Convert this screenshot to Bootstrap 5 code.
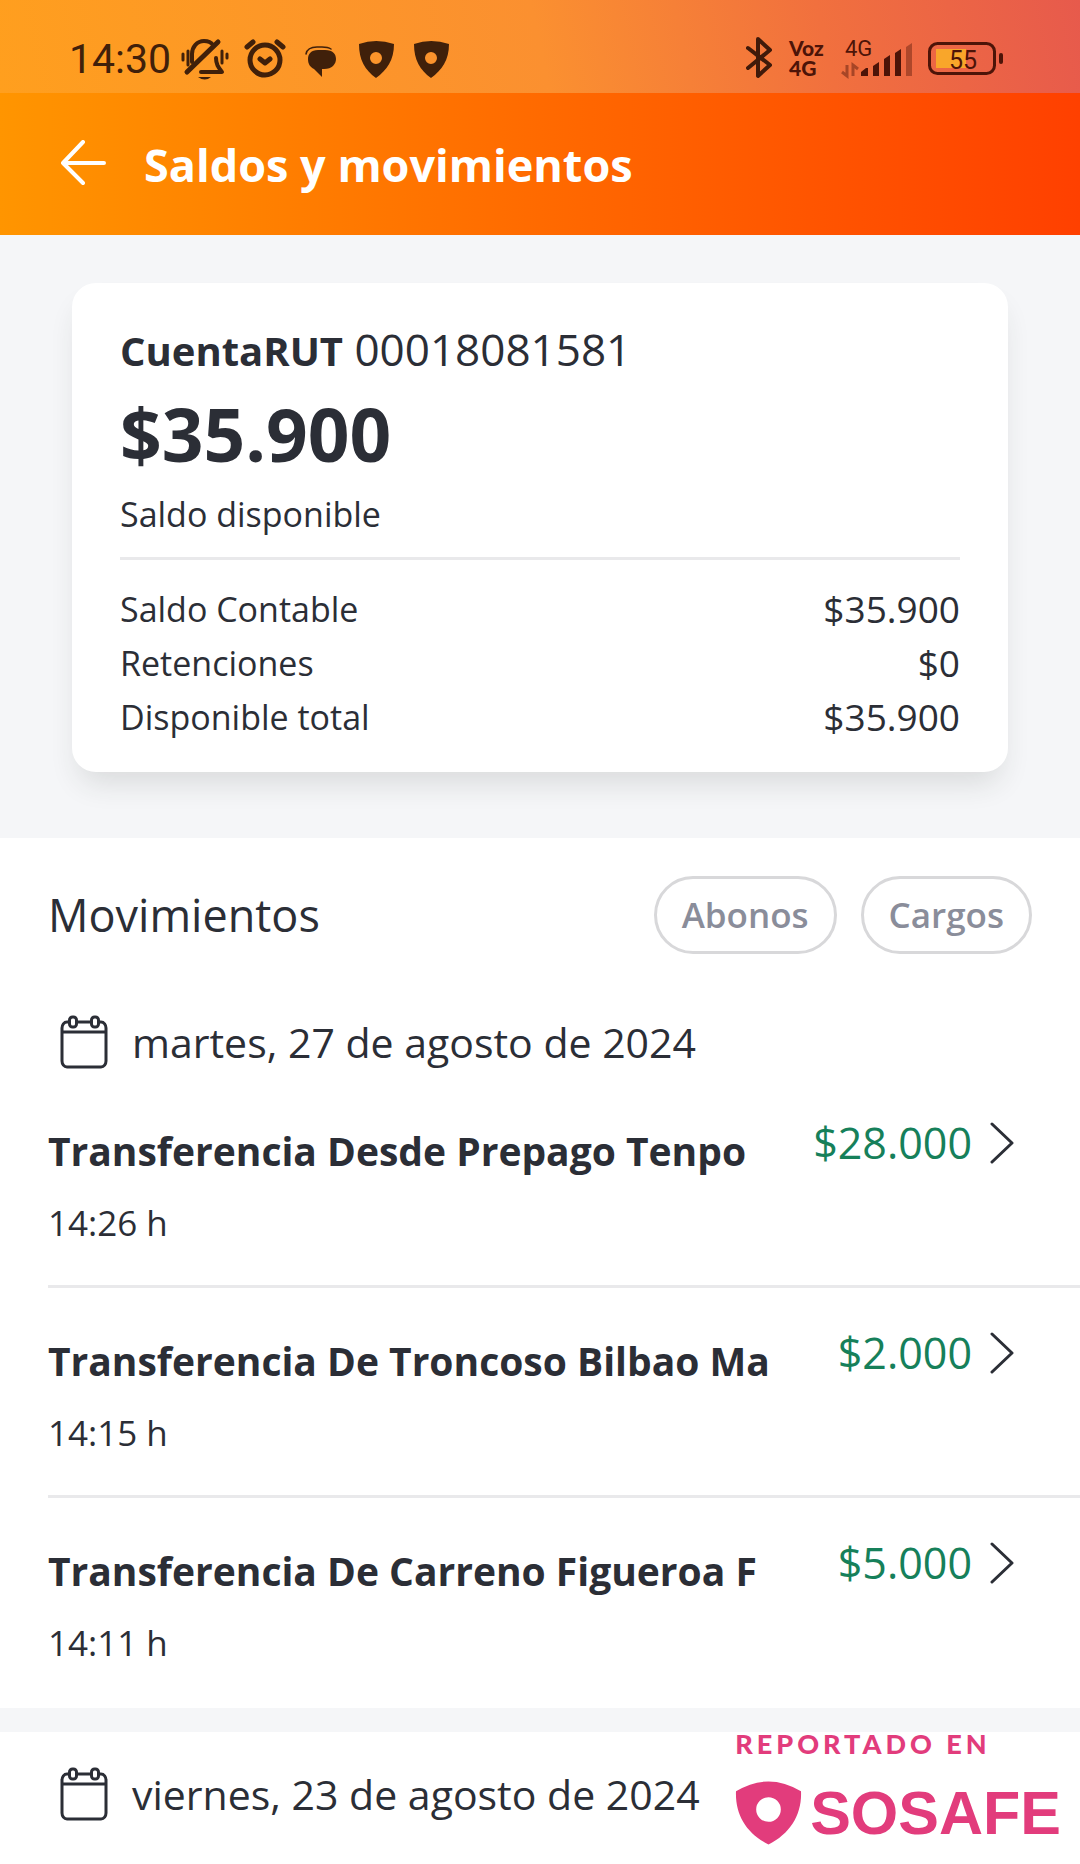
<!DOCTYPE html>
<html lang="es">
<head>
<meta charset="utf-8">
<meta name="viewport" content="width=device-width, initial-scale=1">
<title>Saldos y movimientos</title>
<link href="https://cdn.jsdelivr.net/npm/bootstrap@5.3.0/dist/css/bootstrap.min.css" rel="stylesheet">
<style>
  :root { --ink: #2b2e36; --line: #e9e9eb; --soft: #f5f6f8; --brand: #e23c7c; }
  body { font-family: "Open Sans", "Noto Sans", sans-serif; color: var(--ink); background: #fff; position: relative; overflow-x: hidden; }
  svg { display: block; flex: none; }
  .status-bar { height: 93px; padding: 26px 76px 0 69px; color: #40200a; font-family: Roboto, sans-serif;
    background: linear-gradient(78deg, #ff9f1e 0%, #fb9030 50%, #f1703e 76%, #e75a4c 100%); }
  .status-row { height: 66px; }
  .clock { font-size: 41px; line-height: 70px; }
  .title-bar { height: 142px; padding: 0 60px; color: #fff; background: linear-gradient(90deg, #ff9500, #ff6a00 50%, #ff4000); }
  .title-bar h1 { font-size: 45px; line-height: 64px; font-weight: 700; margin: 2px 0 0 36px; }
  .balance-area { background: var(--soft); padding: 48px 72px 66px; }
  .balance-card { border: 0; border-radius: 24px; padding: 36px 48px 28px; box-shadow: 0 18px 30px -8px rgba(40,50,45,.14); }
  .account-name { font-size: 44px; line-height: 60px; }
  .account-name strong { font-size: 40px; font-weight: 700; }
  .balance-total { font-size: 73px; line-height: 90px; font-weight: 700; }
  .detail-text { font-size: 34px; line-height: 54px; }
  .detail-amount { font-size: 37px; }
  .rule-line { height: 3px; margin: 16px 0 22px; background: var(--line); }
  .section-head { padding: 38px 48px 0; }
  .section-head h2 { font-size: 45px; line-height: 78px; font-weight: 400; }
  .filter-btn { height: 78px; border: 3px solid #d8d8da; border-radius: 39px; color: #8a8d9a; font-size: 35px; line-height: 48px; font-weight: 600; padding: 0 25px; }
  .day-head { padding: 0 60px; margin-top: 58px; font-size: 41px; line-height: 60px; }
  .movement-list { padding-top: 6px; }
  .movement { color: inherit; margin-left: 48px; padding: 35px 66px 38px 0; border-bottom: 3px solid var(--line); }
  .movement:last-child { border-bottom-color: transparent; }
  .movement-name { font-size: 39px; line-height: 60px; font-weight: 700; margin: 8px 0 18px; }
  .movement-time { font-size: 35px; line-height: 48px; }
  .movement-amount { font-size: 43px; line-height: 60px; color: #16805a; }
  .day-gap { height: 24px; background: var(--soft); }
  .day-head-next { margin-top: 32px; padding-bottom: 41px; }
  .reported { position: absolute; right: 19px; bottom: 19px; color: var(--brand); font-family: Lato, sans-serif; }
  .reported-label { font-size: 27px; line-height: 32px; font-weight: 900; letter-spacing: 4px; }
  .reported-name { font-size: 61px; line-height: 64px; font-weight: 700; font-family: "Liberation Sans", sans-serif; }
</style>
<script src="https://cdn.jsdelivr.net/npm/bootstrap@5.3.0/dist/js/bootstrap.bundle.min.js"></script>
</head>
<body>
<div class="status-bar">
  <div class="status-row d-flex align-items-center justify-content-between">
    <div class="d-flex align-items-center">
      <span class="clock">14:30</span>
      <svg class="ms-2" width="288" height="48" viewBox="-2 1 288 48" fill="none" stroke="#40200a" stroke-linecap="round" stroke-linejoin="round" aria-hidden="true">
        <g stroke-width="4"><path d="M11 28V20c0-7 5-13 12-13 4 0 7 1 9 4M35 24c0 6 2 9 6 14H20"/><path d="M6 38 37 8" stroke-width="5"/><path d="M2 20v6M7 17v14M41 17v12M46 20v4" stroke-width="3"/></g>
        <path d="M17 43h13q-6 5-13 0z" fill="#40200a" stroke="none"/>
        <g stroke-width="5"><circle cx="84" cy="26" r="15"/><path d="m79 25 5 4 5-4M66 13l6-5M96 8l6 5"/></g>
        <path d="M125 20c1-5 5-7 11-7h5c4 0 6 0 9 2" stroke-width="1.500"/>
        <path d="M137 16h7c8 0 11 4 11 9s-4 10-12 10h-2v8l-8-8c-4-2-6-5-6-10 0-5 3-9 10-9z" fill="#40200a" stroke="none"/>
        <g fill="#40200a" stroke="none" fill-rule="evenodd"><path id="mini" d="M178 10q17-6 35 0c0 16-7 26-18 34-11-8-17-18-17-34zm17 8a6 6 0 1 0 0 12 6 6 0 0 0 0-12z"/><use href="#mini" x="55"/></g>
      </svg>
    </div>
    <svg width="258" height="48" viewBox="0 1 258 48" aria-hidden="true" font-family="Roboto, sans-serif" fill="#4d1408">
      <path d="m2 14 22 17-12 11V5l12 11L2 34" fill="none" stroke="#401a0a" stroke-width="4" stroke-linecap="round" stroke-linejoin="round"/>
      <g font-family="Lato, sans-serif" font-weight="900" font-size="21"><text x="43" y="22">Voz</text><text x="43" y="42">4G</text></g>
      <text x="99" y="22" font-size="22">4G</text>
      <g fill="none" stroke="#4d1408" stroke-width="3" opacity=".45"><path d="M101 31v11l-5-4M107 42V31l5 4"/></g>
      <path d="M115 42v-4l5-4h2v8zM127 42V32l6-4v14zM138 42V25l6-4v21zM149 42V19l6-4v27z"/>
      <path d="M160 42V13l6-4v33z" opacity=".4"/>
      <rect x="190" y="15" width="30" height="19" fill="#f9a62a"/>
      <rect x="183.500" y="9.500" width="65" height="30" rx="8" fill="none" stroke="#4d1408" stroke-width="3"/>
      <rect x="253" y="19" width="4" height="11" rx="2"/>
      <text x="203" y="35" font-size="25">55</text>
    </svg>
  </div>
</div>
<header class="title-bar d-flex align-items-center">
  <a href="#" aria-label="Volver"><svg width="48" height="48" viewBox="0 0 48 48" fill="none" stroke="#fff" stroke-width="4" stroke-linecap="round" stroke-linejoin="round"><path d="M23 2 3 23l20 20M3 23h41"/></svg></a>
  <h1>Saldos y movimientos</h1>
</header>

<section class="balance-area">
  <div class="card balance-card">
    <div class="account-name"><strong>CuentaRUT</strong> 00018081581</div>
    <div class="balance-total mt-2">$35.900</div>
    <div class="detail-text mt-2">Saldo disponible</div>
    <div class="rule-line"></div>
    <div class="detail-text d-flex justify-content-between"><span>Saldo Contable</span><span class="detail-amount">$35.900</span></div>
    <div class="detail-text d-flex justify-content-between"><span>Retenciones</span><span class="detail-amount">$0</span></div>
    <div class="detail-text d-flex justify-content-between"><span>Disponible total</span><span class="detail-amount">$35.900</span></div>
  </div>
</section>

<main>
  <div class="section-head d-flex justify-content-between">
    <h2 class="mb-0">Movimientos</h2>
    <div class="d-flex gap-4">
      <button type="button" class="btn filter-btn">Abonos</button>
      <button type="button" class="btn filter-btn">Cargos</button>
    </div>
  </div>

  <div class="day-head d-flex align-items-center gap-4">
    <svg width="48" height="54" viewBox="0 0 48 54" fill="none" stroke="#2b2e36" stroke-width="3"><path d="M9 7H7c-3 0-5 3-5 6v33c0 3 2 6 5 6h34c3 0 5-3 5-6V13c0-3-2-6-5-6h-2M17 7h14M2 17h44"/><rect x="9.500" y="2" width="7" height="10" rx="3"/><rect x="31.500" y="2" width="7" height="10" rx="3"/></svg>
    <span>martes, 27 de agosto de 2024</span>
  </div>
  <div class="movement-list">
    <a href="#" class="movement d-flex justify-content-between text-decoration-none">
      <div><div class="movement-name">Transferencia Desde Prepago Tenpo</div><div class="movement-time">14:26 h</div></div>
      <div class="movement-amount d-flex align-self-start align-items-center gap-3"><span>$28.000</span><svg width="26" height="44" viewBox="0 0 26 44" fill="none" stroke="#2b2e36" stroke-width="3" stroke-linecap="round" stroke-linejoin="round"><path d="m4 3 20 19L4 41"/></svg></div>
    </a>
    <a href="#" class="movement d-flex justify-content-between text-decoration-none">
      <div><div class="movement-name">Transferencia De Troncoso Bilbao Ma</div><div class="movement-time">14:15 h</div></div>
      <div class="movement-amount d-flex align-self-start align-items-center gap-3"><span>$2.000</span><svg width="26" height="44" viewBox="0 0 26 44" fill="none" stroke="#2b2e36" stroke-width="3" stroke-linecap="round" stroke-linejoin="round"><path d="m4 3 20 19L4 41"/></svg></div>
    </a>
    <a href="#" class="movement d-flex justify-content-between text-decoration-none">
      <div><div class="movement-name">Transferencia De Carreno Figueroa F</div><div class="movement-time">14:11 h</div></div>
      <div class="movement-amount d-flex align-self-start align-items-center gap-3"><span>$5.000</span><svg width="26" height="44" viewBox="0 0 26 44" fill="none" stroke="#2b2e36" stroke-width="3" stroke-linecap="round" stroke-linejoin="round"><path d="m4 3 20 19L4 41"/></svg></div>
    </a>
  </div>
  <div class="day-gap"></div>
  <div class="day-head day-head-next d-flex align-items-center gap-4">
    <svg width="48" height="54" viewBox="0 0 48 54" fill="none" stroke="#2b2e36" stroke-width="3"><path d="M9 7H7c-3 0-5 3-5 6v33c0 3 2 6 5 6h34c3 0 5-3 5-6V13c0-3-2-6-5-6h-2M17 7h14M2 17h44"/><rect x="9.500" y="2" width="7" height="10" rx="3"/><rect x="31.500" y="2" width="7" height="10" rx="3"/></svg>
    <span>viernes, 23 de agosto de 2024</span>
  </div>
</main>

<div class="reported">
  <div class="reported-label">REPORTADO EN</div>
  <div class="d-flex align-items-center gap-2 mt-3 pt-1">
    <svg width="67" height="66" viewBox="0 0 68 66" fill="#e23c7c" fill-rule="evenodd" aria-hidden="true"><path d="M1 11Q34-9 67 11c1 24-11 43-33 54C12 54 0 35 1 11zm33 6a12.500 12.500 0 1 0 0 25 12.500 12.500 0 0 0 0-25z"/></svg>
    <span class="reported-name">SOSAFE</span>
  </div>
</div>
</body>
</html>
